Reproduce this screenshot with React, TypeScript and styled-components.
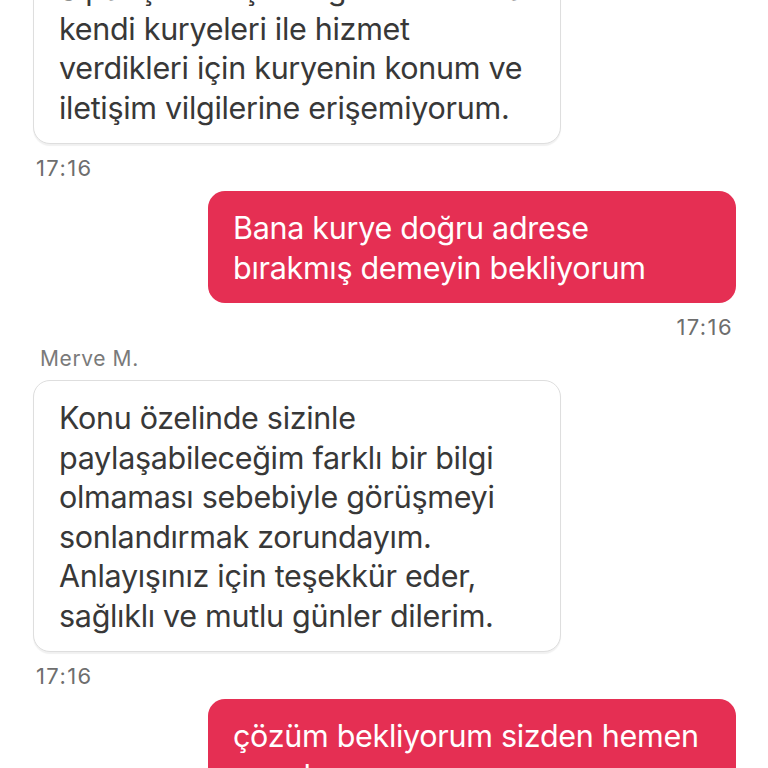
import styled, { createGlobalStyle } from 'styled-components';

type Message = {
  id: number;
  side: 'in' | 'out';
  author?: string;
  lines: string[];
  time: string;
};

const messages: Message[] = [
  {
    id: 1,
    side: 'in',
    lines: [
      'Sipariş vermiş olduğunuz restoran',
      'kendi kuryeleri ile hizmet',
      'verdikleri için kuryenin konum ve',
      'iletişim vilgilerine erişemiyorum.',
    ],
    time: '17:16',
  },
  {
    id: 2,
    side: 'out',
    lines: ['Bana kurye doğru adrese', 'bırakmış demeyin bekliyorum'],
    time: '17:16',
  },
  {
    id: 3,
    side: 'in',
    author: 'Merve M.',
    lines: [
      'Konu özelinde sizinle',
      'paylaşabileceğim farklı bir bilgi',
      'olmaması sebebiyle görüşmeyi',
      'sonlandırmak zorundayım.',
      'Anlayışınız için teşekkür eder,',
      'sağlıklı ve mutlu günler dilerim.',
    ],
    time: '17:16',
  },
  {
    id: 4,
    side: 'out',
    lines: ['çözüm bekliyorum sizden hemen', 'anında'],
    time: '17:16',
  },
];

const GlobalStyle = createGlobalStyle`
  html, body {
    margin: 0;
    padding: 0;
    background: #ffffff;
    overflow: hidden;
  }
  body {
    font-family: Inter, Roboto, "Noto Sans", "Liberation Sans", sans-serif;
    -webkit-font-smoothing: antialiased;
  }
`;

const Thread = styled.div`
  display: flex;
  flex-direction: column;
  height: 768px;
  overflow: hidden;
`;

const Scroller = styled.div`
  display: flex;
  flex-direction: column;
  padding: 0 32px 0 33px;
  margin-top: -49px;
`;

const Group = styled.div<{ $side: 'in' | 'out' }>`
  display: flex;
  flex-direction: column;
  align-items: ${(p) => (p.$side === 'out' ? 'flex-end' : 'flex-start')};
  margin-bottom: 10px;
`;

const Author = styled.div`
  font-size: 21px;
  line-height: 24px;
  letter-spacing: 0.6px;
  color: #7a7a7a;
  padding-left: 7px;
  margin-top: -3px;
  margin-bottom: 9px;
`;

const Bubble = styled.div<{ $side: 'in' | 'out' }>`
  box-sizing: border-box;
  width: 528px;
  padding: 17px 16px 16px 25px;
  border-radius: 17px;
  font-size: 30.5px;
  line-height: 39.5px;
  letter-spacing: -0.3px;
  color: ${(p) => (p.$side === 'out' ? '#ffffff' : '#383838')};
  background: ${(p) => (p.$side === 'out' ? '#e52f53' : '#ffffff')};
  border: ${(p) => (p.$side === 'out' ? 'none' : '1.5px solid #dedede')};
  box-shadow: ${(p) => (p.$side === 'out' ? 'none' : '0 1.5px 1px rgba(0, 0, 0, 0.06)')};
`;

const Line = styled.div`
  white-space: nowrap;
`;

const Time = styled.div<{ $side: 'in' | 'out' }>`
  font-size: 22px;
  line-height: 26px;
  letter-spacing: 1.4px;
  color: #6e6e6e;
  margin-top: 11px;
  padding: ${(p) => (p.$side === 'out' ? '0 3px 0 0' : '0 0 0 3px')};
`;

export default function App() {
  return (
    <>
      <GlobalStyle />
      <Thread>
        <Scroller>
          {messages.map((m) => (
            <Group key={m.id} $side={m.side}>
              {m.author && <Author>{m.author}</Author>}
              <Bubble $side={m.side}>
                {m.lines.map((l) => (
                  <Line key={l}>{l}</Line>
                ))}
              </Bubble>
              <Time $side={m.side}>{m.time}</Time>
            </Group>
          ))}
        </Scroller>
      </Thread>
    </>
  );
}
